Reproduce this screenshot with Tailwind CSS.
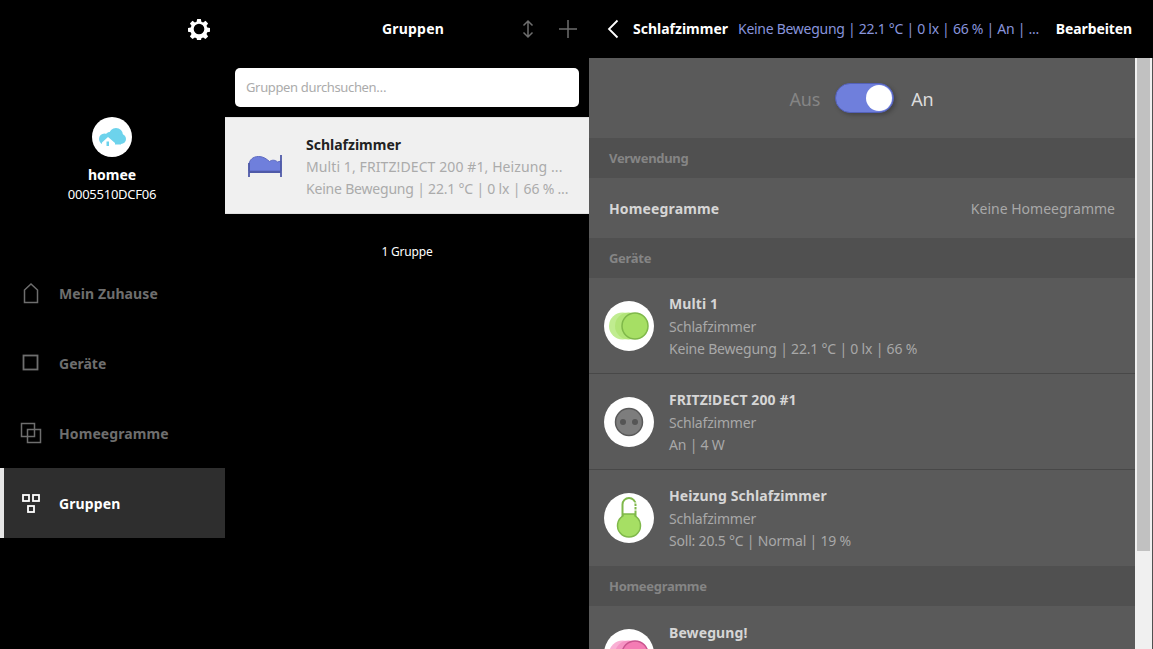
<!DOCTYPE html>
<html lang="de">
<head>
  <meta charset="UTF-8">
  <script src="https://cdn.jsdelivr.net/npm/@tailwindcss/browser@4"></script>
  <title>homee</title>
</head>
<body class="bg-black h-[649px] w-[1153px] overflow-hidden flex font-['Noto_Sans','Open_Sans',sans-serif] text-[14px] tracking-[-0.2px]">
  <!-- Sidebar -->
  <aside class="w-[225px] shrink-0 flex flex-col">
    <div class="h-[58px] flex items-center justify-end pr-[15px]">
      <svg class="w-[22px] h-[22px]" viewBox="0 0 24 24" fill="#fff"><path fill-rule="evenodd" d="M10 1h4l.6 3 1.900.8 2.600-1.700 2.800 2.800-1.700 2.600.8 1.900 3 .6v4l-3 .6-.8 1.900 1.700 2.600-2.800 2.800-2.600-1.700-1.900.8-.6 3h-4l-.6-3-1.900-.8-2.600 1.700-2.800-2.800 1.700-2.600-.8-1.900-3-.6v-4l3-.6.8-1.900-1.700-2.600 2.800-2.800 2.600 1.700 1.900-.8zM12 6.200a5.800 5.800 0 1 0 0 11.600 5.800 5.800 0 0 0 0-11.600z"/></svg>
    </div>
    <div class="h-[200px] flex flex-col items-center pt-[59px] pr-[1px]">
      <div class="w-[40px] h-[40px] rounded-full bg-white flex items-center justify-center">
        <svg class="w-[28px] h-[18px]" viewBox="0 0 28 18"><circle cx="6.500" cy="11" r="5.500" fill="#6dd3ec"/><circle cx="12" cy="9" r="5" fill="#6dd3ec"/><circle cx="18" cy="7" r="7" fill="#6dd3ec"/><circle cx="23" cy="11" r="5" fill="#6dd3ec"/><path fill="#6dd3ec" d="M6 12h17v4.500H6z"/><path fill="#fff" d="M4 18v-3.500L10 9l1.500 1.300L17 15v3z"/><path fill="#6dd3ec" d="M8.500 13.500h2.500V18H8.500z"/></svg>
      </div>
      <div class="text-white font-bold text-[14px] tracking-[0px] mt-[8px] leading-[20px]">homee</div>
      <div class="text-white text-[13px] leading-[20px] tracking-[-0.25px] -mt-[1px]">0005510DCF06</div>
    </div>
    <nav class="flex flex-col">
      <a class="h-[70px] flex items-center pl-[20px] gap-[17px] text-[#6e6e6e] font-bold tracking-[0.1px]">
        <svg class="w-[22px] h-[22px]" viewBox="0 0 22 22" fill="none" stroke="#6e6e6e" stroke-width="1.500"><path d="M4.500 20.500V8L11 2l6.500 6v12.500z"/></svg>
        <span>Mein Zuhause</span>
      </a>
      <a class="h-[70px] flex items-center pl-[20px] gap-[17px] text-[#6e6e6e] font-bold tracking-[0px]">
        <svg class="w-[22px] h-[22px]" viewBox="0 0 22 22" fill="none" stroke="#6e6e6e" stroke-width="1.800"><rect x="3.500" y="3.500" width="14" height="14"/></svg>
        <span>Geräte</span>
      </a>
      <a class="h-[70px] flex items-center pl-[20px] gap-[17px] text-[#6e6e6e] font-bold tracking-[0.1px]">
        <svg class="w-[22px] h-[22px]" viewBox="0 0 22 22" fill="none" stroke="#6e6e6e" stroke-width="1.500"><rect x="1.500" y="1.500" width="13" height="13"/><rect x="7.500" y="7.500" width="13" height="13"/></svg>
        <span>Homeegramme</span>
      </a>
      <a class="h-[70px] flex items-center gap-[17px] text-white font-bold tracking-[0.1px] bg-[#2e2e2e] border-l-4 border-[#e6e6e6] pl-[16px]">
        <svg class="w-[22px] h-[22px]" viewBox="0 0 22 22" fill="none" stroke="#fff" stroke-width="1.800"><rect x="3" y="3" width="6" height="6"/><rect x="13" y="3" width="6" height="6"/><rect x="8" y="14" width="6" height="6"/></svg>
        <span>Gruppen</span>
      </a>
    </nav>
  </aside>

  <!-- Group list -->
  <section class="w-[364px] shrink-0 flex flex-col">
    <header class="h-[58px] relative flex items-center justify-center">
      <span class="text-white font-bold tracking-[0.2px] ml-[12px] -mt-[2px]">Gruppen</span>
      <svg class="absolute left-[295px] top-[19px] w-[16px] h-[20px]" viewBox="0 0 16 20" fill="none" stroke="#6e6e6e" stroke-width="1.500"><path d="M8 2v16M3.500 6.500 8 2l4.500 4.500M3.500 13.500 8 18l4.500-4.500"/></svg>
      <svg class="absolute left-[333px] top-[19px] w-[20px] h-[20px]" viewBox="0 0 20 20" fill="none" stroke="#6e6e6e" stroke-width="1.500"><path d="M10 1v18M1 10h18"/></svg>
    </header>
    <div class="px-[10px] pt-[10px]">
      <div class="h-[39px] bg-white rounded-[5px] flex items-center px-[11px] text-[#ababab] text-[13px] tracking-[-0.35px]">Gruppen durchsuchen…</div>
    </div>
    <div class="mt-[10px] h-[97px] bg-[#f0f0f0] border-y border-[#e0e0e0] flex items-center">
      <div class="w-[81px] shrink-0 pl-[23px]">
        <svg class="w-[34px] h-[22px]" viewBox="0 0 34 22"><path fill="#6f7fdc" stroke="#5d69c0" d="M1 16V10C1 5 5 1.500 10.500 1.500 15.500 1.500 18.500 4 21.500 6.500 24 4.500 27.500 5 29.500 7L33 6v10z"/><path fill="none" stroke="#4f5aa8" stroke-width="1.800" d="M1 8v14M33 0v22M1 17h32"/></svg>
      </div>
      <div class="min-w-0 flex-1 pr-[20px] pt-[2px]">
        <div class="font-bold text-[#222] leading-[22px] tracking-[0px]">Schlafzimmer</div>
        <div class="text-[#ababab] leading-[22px] truncate tracking-[0.1px]">Multi 1, FRITZ!DECT 200 #1, Heizung ...</div>
        <div class="text-[#ababab] leading-[22px] truncate">Keine Bewegung | 22.1 °C | 0 lx | 66 % ...</div>
      </div>
    </div>
    <div class="text-center text-white text-[12px] mt-[29px] leading-[18px]">1 Gruppe</div>
  </section>

  <!-- Detail -->
  <main class="flex-1 min-w-0 flex flex-col">
    <header class="h-[58px] shrink-0 flex items-center text-white pl-[18px] pr-[21px]">
      <svg class="w-[12px] h-[20px] shrink-0" viewBox="0 0 12 20" fill="none" stroke="#fff" stroke-width="1.800"><path d="M10.500 1.500 2 10l8.500 8.500"/></svg>
      <span class="font-bold ml-[14px] tracking-[0px] -mt-[2px]">Schlafzimmer</span>
      <span class="ml-[10px] text-[#8894dc] flex-1 truncate tracking-[-0.28px] -mt-[2px]">Keine Bewegung | 22.1 °C | 0 lx | 66 % | An | ...</span>
      <span class="font-bold ml-[10px] tracking-[-0.1px] -mt-[2px]">Bearbeiten</span>
    </header>
    <div class="flex-1 min-h-0 flex overflow-hidden">
      <div class="flex-1 min-w-0 bg-[#5a5a5a] text-[#c4c4c4]">
        <div class="h-[80px] flex items-center justify-center text-[18px] pr-[1px]">
          <span class="text-[#858585] mt-[2px]">Aus</span>
          <div class="w-[59px] h-[30px] ml-[15px] rounded-full bg-[#6f7fdc] border border-[#5461b8] relative shadow-[2px_2px_4px_rgba(0,0,0,0.25)]">
            <div class="absolute right-[0px] top-[0px] w-[26px] h-[26px] mt-[1px] mr-[1px] rounded-full bg-white"></div>
          </div>
          <span class="text-[#dcdcdc] mt-[2px] ml-[17px]">An</span>
        </div>
        <div class="h-[40px] bg-[#505050] flex items-center pl-[20px] pt-[2px] text-[#858585] font-bold text-[13px] tracking-[-0.3px]">Verwendung</div>
        <div class="h-[60px] flex items-center justify-between pl-[20px] pr-[20px]">
          <span class="font-bold text-[#d6d6d6] tracking-[0.15px]">Homeegramme</span>
          <span class="text-[#a8a8a8] tracking-[0px]">Keine Homeegramme</span>
        </div>
        <div class="h-[40px] bg-[#505050] flex items-center pl-[20px] pt-[2px] text-[#858585] font-bold text-[13px] tracking-[-0.3px]">Geräte</div>

        <div class="h-[96px] flex items-center pl-[15px] border-b border-[#484848]">
          <div class="w-[50px] h-[50px] rounded-full bg-white flex items-center justify-center shrink-0">
            <svg class="w-[40px] h-[28px]" viewBox="0 0 40 28"><circle cx="13.500" cy="14" r="13.500" fill="#c0ec90"/><circle cx="19.500" cy="14" r="13.500" fill="#b2e578"/><circle cx="26" cy="14" r="13" fill="#a6df64" stroke="#7fb84a" stroke-width="1.500"/></svg>
          </div>
          <div class="ml-[15px] pt-[2px]">
            <div class="font-bold text-[#d6d6d6] leading-[22px] tracking-[0.1px] -mt-[1px] mb-[1px]">Multi 1</div>
            <div class="text-[#a8a8a8] leading-[22px]">Schlafzimmer</div>
            <div class="text-[#a8a8a8] leading-[22px]">Keine Bewegung | 22.1 °C | 0 lx | 66 %</div>
          </div>
        </div>
        <div class="h-[96px] flex items-center pl-[15px] border-b border-[#484848]">
          <div class="w-[50px] h-[50px] rounded-full bg-white flex items-center justify-center shrink-0">
            <svg class="w-[30px] h-[30px]" viewBox="0 0 30 30"><circle cx="15" cy="15" r="13.500" fill="#7d7d7d" stroke="#5a5a5a" stroke-width="1.500"/><circle cx="9" cy="15" r="3" fill="#555"/><circle cx="21" cy="15" r="3" fill="#555"/></svg>
          </div>
          <div class="ml-[15px] pt-[2px]">
            <div class="font-bold text-[#d6d6d6] leading-[22px] tracking-[0.1px] -mt-[1px] mb-[1px]">FRITZ!DECT 200 #1</div>
            <div class="text-[#a8a8a8] leading-[22px]">Schlafzimmer</div>
            <div class="text-[#a8a8a8] leading-[22px]">An | 4 W</div>
          </div>
        </div>
        <div class="h-[96px] flex items-center pl-[15px]">
          <div class="w-[50px] h-[50px] rounded-full bg-white flex items-center justify-center shrink-0">
            <svg class="w-[26px] h-[44px]" viewBox="0 0 26 44"><path fill="#fff" stroke="#7fb84a" stroke-width="2" d="M6.500 22V8.500a6.500 6.500 0 0 1 13 0V22"/><path fill="#a6df64" stroke="#7fb84a" stroke-width="1.500" d="M7 18h12v1.800a11.500 11.500 0 1 1-12 0z"/><path fill="none" stroke="#fff" stroke-width="1.200" d="M15 7h6M15 10.500h6M15 14h6"/></svg>
          </div>
          <div class="ml-[15px] pt-[2px]">
            <div class="font-bold text-[#d6d6d6] leading-[22px] tracking-[0.1px] -mt-[1px] mb-[1px]">Heizung Schlafzimmer</div>
            <div class="text-[#a8a8a8] leading-[22px]">Schlafzimmer</div>
            <div class="text-[#a8a8a8] leading-[22px]">Soll: 20.5 °C | Normal | 19 %</div>
          </div>
        </div>
        <div class="h-[40px] bg-[#505050] flex items-center pl-[20px] pt-[2px] text-[#858585] font-bold text-[13px] tracking-[-0.3px]">Homeegramme</div>
        <div class="h-[96px] flex items-start pl-[15px] pt-[23px]">
          <div class="w-[50px] h-[50px] rounded-full bg-white flex items-center justify-center shrink-0">
            <svg class="w-[40px] h-[28px]" viewBox="0 0 40 28"><circle cx="13.500" cy="14" r="13.500" fill="#f9b0d4"/><circle cx="19.500" cy="14" r="13.500" fill="#f694c4"/><circle cx="26" cy="14" r="13" fill="#f47cb4" stroke="#c9558f" stroke-width="1.500"/></svg>
          </div>
          <div class="ml-[15px] -mt-[7px]">
            <div class="font-bold text-[#d6d6d6] leading-[22px] tracking-[0.1px]">Bewegung!</div>
          </div>
        </div>
      </div>
      <!-- Scrollbar -->
      <div class="w-[18px] shrink-0 bg-[#f0f0f0] pl-[2px] border-r border-[#505050]">
        <div class="h-[493px] w-[13px] bg-[#c1c1c1]"></div>
      </div>
    </div>
  </main>
</body>
</html>
